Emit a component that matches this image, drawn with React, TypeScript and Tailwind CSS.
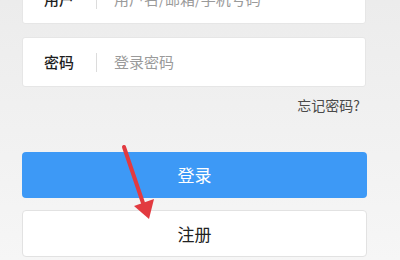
const Field = ({ label, placeholder, className }: { label: string; placeholder: string; className?: string }) => (
  <div className={`flex h-[50px] w-[344px] items-center rounded-[3px] border border-[#e6e6e6] bg-white ${className ?? ""}`}>
    <span className="w-[73px] pl-[21px] text-[15px] font-medium text-[#1e1e1e]">{label}</span>
    <span className="h-[19px] w-px bg-[#dcdcdc]" />
    <span className="pl-[17px] text-[15px] text-[#9a9a9a]">{placeholder}</span>
  </div>
);

export default function App() {
  return (
    <div
      className="relative h-[260px] w-[400px] overflow-hidden bg-gradient-to-b from-[#ececec] via-[#f1f1f1] to-[#f6f6f6]"
      style={{ fontFamily: '"Noto Sans CJK SC", "Noto Sans", sans-serif' }}
    >
      <div className="pl-[22px]">
        <Field label="用户" placeholder="用户名/邮箱/手机号码" className="-mt-[26px]" />
        <Field label="密码" placeholder="登录密码" className="mt-[13px]" />
        <div className="mt-[7px] flex w-[344px] justify-end pr-[6px] text-[14px] leading-[22px] text-[#4a4a4a]">
          忘记密码?
        </div>
        <button className="mt-[36px] flex h-[46px] w-[345px] items-center justify-center rounded-[4px] bg-[#3d99f6] text-[17px] text-white">
          登录
        </button>
        <button className="mt-[12px] flex h-[47px] w-[345px] items-center justify-center rounded-[4px] border border-[#e2e2e2] bg-white text-[17px] text-[#222]">
          注册
        </button>
      </div>
      <svg className="pointer-events-none absolute left-0 top-0" width="400" height="260" viewBox="0 0 400 260">
        <line x1="124" y1="147" x2="143" y2="203" stroke="#e23a40" strokeWidth="4" strokeLinecap="round" />
        <polygon points="134,206 154,199 149,219" fill="#e23a40" />
      </svg>
    </div>
  );
}
